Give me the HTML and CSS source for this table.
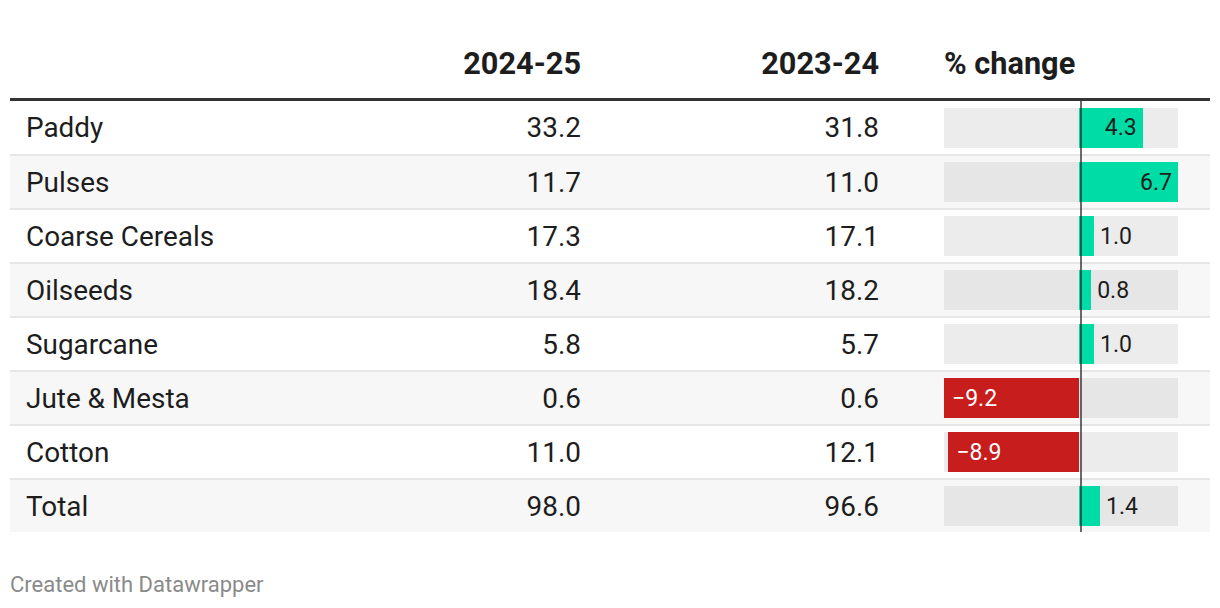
FILE: index.html
```html
<!DOCTYPE html>
<html lang="en">
<head>
<meta charset="utf-8">
<title>Crop production</title>
<link rel="stylesheet" href="styles.css">
</head>
<body>
<div class="page">
  <div class="table">
    <div class="row head">
      <div class="cell label"></div>
      <div class="cell num">2024-25</div>
      <div class="cell num">2023-24</div>
      <div class="cell barcol">% change</div>
    </div>
    <div class="tbody">
      <div class="row first">
        <div class="cell label">Paddy</div>
        <div class="cell num">33.2</div>
        <div class="cell num">31.8</div>
        <div class="cell barcol"><div class="track"><div class="bar pos in" style="left:57.86%;width:27.04%"><span>4.3</span></div></div></div>
      </div>
      <div class="row alt">
        <div class="cell label">Pulses</div>
        <div class="cell num">11.7</div>
        <div class="cell num">11.0</div>
        <div class="cell barcol"><div class="track"><div class="bar pos in" style="left:57.86%;width:42.14%"><span>6.7</span></div></div></div>
      </div>
      <div class="row">
        <div class="cell label">Coarse Cereals</div>
        <div class="cell num">17.3</div>
        <div class="cell num">17.1</div>
        <div class="cell barcol"><div class="track"><div class="bar pos out" style="left:57.86%;width:6.29%"><span>1.0</span></div></div></div>
      </div>
      <div class="row alt">
        <div class="cell label">Oilseeds</div>
        <div class="cell num">18.4</div>
        <div class="cell num">18.2</div>
        <div class="cell barcol"><div class="track"><div class="bar pos out" style="left:57.86%;width:5.03%"><span>0.8</span></div></div></div>
      </div>
      <div class="row">
        <div class="cell label">Sugarcane</div>
        <div class="cell num">5.8</div>
        <div class="cell num">5.7</div>
        <div class="cell barcol"><div class="track"><div class="bar pos out" style="left:57.86%;width:6.29%"><span>1.0</span></div></div></div>
      </div>
      <div class="row alt">
        <div class="cell label">Jute &amp; Mesta</div>
        <div class="cell num">0.6</div>
        <div class="cell num">0.6</div>
        <div class="cell barcol"><div class="track"><div class="bar neg" style="left:0%;width:57.86%"><span>−9.2</span></div></div></div>
      </div>
      <div class="row">
        <div class="cell label">Cotton</div>
        <div class="cell num">11.0</div>
        <div class="cell num">12.1</div>
        <div class="cell barcol"><div class="track"><div class="bar neg" style="left:1.89%;width:55.97%"><span>−8.9</span></div></div></div>
      </div>
      <div class="row alt">
        <div class="cell label">Total</div>
        <div class="cell num">98.0</div>
        <div class="cell num">96.6</div>
        <div class="cell barcol"><div class="track"><div class="bar pos out" style="left:57.86%;width:8.81%"><span>1.4</span></div></div></div>
      </div>
      <div class="zero"></div>
    </div>
  </div>
  <div class="footer">Created with Datawrapper</div>
</div>
</body>
</html>
```

FILE: styles.css
```css
html, body {
  margin: 0;
  padding: 0;
  background: #ffffff;
}

.page {
  padding: 10px;
  font-family: Roboto, "Liberation Sans", sans-serif;
  color: #1d1d1d;
}

.table {
  width: 1200px;
}

.row {
  display: grid;
  grid-template-columns: 274px 281px 298px 1fr;
  padding-left: 16px;
  align-items: center;
  height: 52px;
  border-top: 2px solid #e6e6e6;
  font-size: 27.9px;
}

.row.alt {
  background: #f7f7f7;
}

.row.first {
  border-top: 0;
  height: 53px;
}

.row.head {
  grid-template-columns: 273px 281px 298px 1fr;
  height: 91px;
  border-top: 0;
  border-bottom: 3px solid #333333;
  align-items: end;
  box-sizing: border-box;
  font-size: 30.7px;
  font-weight: 700;
  line-height: 36px;
  padding-left: 17px;
}

.row.head .cell {
  padding-bottom: 16px;
}

.cell.num {
  text-align: right;
}

.cell.barcol {
  padding-left: 65px;
  padding-right: 32px;
}

.tbody {
  position: relative;
}

.track {
  position: relative;
  height: 40px;
  background: #ececec;
}

.row.alt .track {
  background: #e6e6e6;
}

.bar {
  position: absolute;
  top: 0;
  bottom: 0;
  display: flex;
  align-items: center;
  font-size: 23px;
}

.bar.pos {
  background: #00dca6;
}

.bar.neg {
  background: #c71e1d;
  color: #ffffff;
  padding-left: 8px;
  box-sizing: border-box;
}

.bar.pos.in {
  justify-content: flex-end;
  padding-right: 6px;
  box-sizing: border-box;
}

.bar.pos.out span {
  position: absolute;
  left: 100%;
  margin-left: 6px;
  white-space: nowrap;
}

.zero {
  position: absolute;
  top: 0;
  bottom: 0;
  left: 1070px;
  width: 2px;
  background: rgba(29, 29, 29, 0.65);
}

.footer {
  margin-top: 40px;
  font-size: 22px;
  line-height: 26px;
  color: #8a8a8a;
}
```
